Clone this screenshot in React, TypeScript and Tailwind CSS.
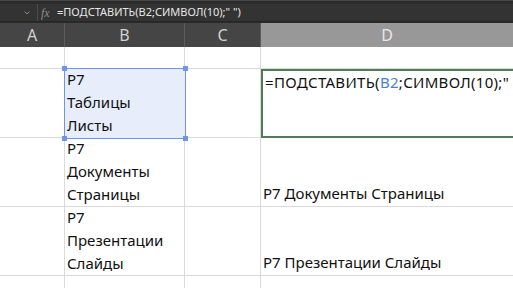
import React from 'react';

const cellFont = { fontFamily: '"Noto Sans", "Open Sans", sans-serif' };

const Header = ({ label, active, border = true }: { label: string; active?: boolean; border?: boolean }) => (
  <div
    className={`flex items-center justify-center text-[16px] ${active ? 'bg-[#989898] text-[#e8e8e8]' : 'bg-[#454545] text-[#d0d0d0]'} ${border ? 'border-r border-[#5c5c5c]' : ''}`}
  >
    {label}
  </div>
);

const Lines = ({ items }: { items: string[] }) => (
  <div className="flex flex-col pl-[2px] -mt-[1px] leading-[23px]">
    {items.map((t) => (
      <span key={t}>{t}</span>
    ))}
  </div>
);

export default function App() {
  return (
    <div className="w-[513px] h-[288px] overflow-hidden bg-white text-[15px] text-[#111]" style={cellFont}>
      {/* formula bar */}
      <div className="h-[23px] bg-[#2b2b2b] pt-[3px] border-t border-[#474747]">
        <div className="h-[18px] flex items-center bg-[#333333] border-b border-[#262626]">
          <div className="w-[38px] h-full flex items-center justify-end pr-[7px] border-r border-[#4a4a4a]">
            <svg width="6" height="4" viewBox="0 0 6 4">
              <path d="M0.5 0.5 L3 3 L5.5 0.5" stroke="#8a8a8a" fill="none" strokeWidth="1" />
            </svg>
          </div>
          <span className="ml-[3px] w-[14px] text-[12px] italic text-[#8d8d8d]" style={{ fontFamily: '"Liberation Serif", serif' }}>
            fx
          </span>
          <span className="ml-[2px] text-[11px] text-[#e6e6e6] whitespace-nowrap">=ПОДСТАВИТЬ(B2;СИМВОЛ(10);" ")</span>
        </div>
      </div>

      <div className="grid grid-cols-[65px_120px_76px_1fr] grid-rows-[24px_22px_69px_69px_69px_1fr] h-[265px]">
        <Header label="A" />
        <Header label="B" />
        <Header label="C" />
        <Header label="D" active border={false} />

        {/* row 1 */}
        <div className="border-r border-b border-[#dadada]" />
        <div className="border-r border-b border-[#dadada]" />
        <div className="border-r border-b border-[#dadada]" />
        <div className="border-b border-[#dadada]" />

        {/* row 2 */}
        <div className="border-r border-b border-[#dadada]" />
        <div className="relative bg-[#e7edfb] outline outline-1 outline-[#6f95e8]">
          <Lines items={['Р7', 'Таблицы', 'Листы']} />
          <span className="absolute -left-[3px] -top-[3px] w-[5px] h-[5px] bg-[#6f95e8]" />
          <span className="absolute -right-[3px] -top-[3px] w-[5px] h-[5px] bg-[#6f95e8]" />
          <span className="absolute -left-[3px] -bottom-[3px] w-[5px] h-[5px] bg-[#6f95e8]" />
          <span className="absolute -right-[3px] -bottom-[3px] w-[5px] h-[5px] bg-[#6f95e8]" />
        </div>
        <div className="border-r border-b border-[#dadada]" />
        <div className="border-2 border-r-0 border-[#4f7b59] pl-[2px] leading-[23px] whitespace-nowrap overflow-hidden tracking-[0.3px]">
          =ПОДСТАВИТЬ(<span className="text-[#4a7fdc]">B2</span>;СИМВОЛ(10);"
        </div>

        {/* row 3 */}
        <div className="border-r border-b border-[#dadada]" />
        <div className="border-r border-b border-[#dadada]">
          <Lines items={['Р7', 'Документы', 'Страницы']} />
        </div>
        <div className="border-r border-b border-[#dadada]" />
        <div className="border-b border-[#dadada] flex items-end pl-[2px] pb-[1px] leading-[23px] whitespace-nowrap">
          Р7 Документы Страницы
        </div>

        {/* row 4 */}
        <div className="border-r border-b border-[#dadada]" />
        <div className="border-r border-b border-[#dadada]">
          <Lines items={['Р7', 'Презентации', 'Слайды']} />
        </div>
        <div className="border-r border-b border-[#dadada]" />
        <div className="border-b border-[#dadada] flex items-end pl-[2px] pb-[1px] leading-[23px] whitespace-nowrap">
          Р7 Презентации Слайды
        </div>

        {/* row 5 */}
        <div className="border-r border-[#dadada]" />
        <div className="border-r border-[#dadada]" />
        <div className="border-r border-[#dadada]" />
        <div />
      </div>
    </div>
  );
}
